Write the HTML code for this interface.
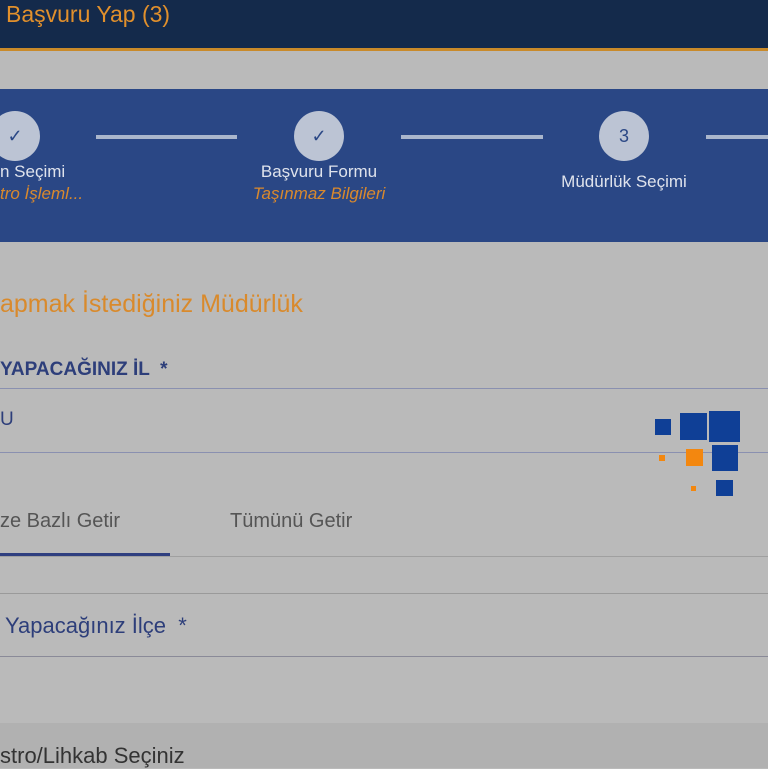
<!DOCTYPE html><html><head><meta charset="utf-8"><style>
body{margin:0;width:768px;height:768px;overflow:hidden;background:#bababa;font-family:"Liberation Sans",sans-serif;position:relative}
.a{position:absolute;white-space:nowrap}
.c{position:absolute;width:50px;height:50px;border-radius:50%;background:#bcc4d4;top:111px;color:#2a4785;font-size:18px;text-align:center;line-height:50px}
.l{position:absolute;height:4px;background:#aab6cc;top:135px}
.s{position:absolute}
</style></head><body>
<div class="a" style="left:0;top:0;width:768px;height:48px;background:#142a4b;border-bottom:3px solid #c98a2a"></div>
<div class="a" style="left:6px;top:1px;color:#e1902c;font-size:23px">Başvuru Yap (3)</div>
<div class="a" style="left:0;top:89px;width:768px;height:153px;background:#2a4785"></div>
<div class="c" style="left:-10px">✓</div>
<div class="c" style="left:294px">✓</div>
<div class="c" style="left:599px">3</div>
<div class="l" style="left:96px;width:141px"></div>
<div class="l" style="left:401px;width:142px"></div>
<div class="l" style="left:706px;width:62px"></div>
<div class="a" style="left:0;top:162px;color:#dfe3ec;font-size:17px">n Seçimi</div>
<div class="a" style="left:0;top:184px;color:#d9892d;font-size:17px;font-style:italic">tro İşleml...</div>
<div class="a" style="left:219px;width:200px;text-align:center;top:162px;color:#dfe3ec;font-size:17px">Başvuru Formu</div>
<div class="a" style="left:219px;width:200px;text-align:center;top:184px;color:#d9892d;font-size:17px;font-style:italic">Taşınmaz Bilgileri</div>
<div class="a" style="left:524px;width:200px;text-align:center;top:172px;color:#dfe3ec;font-size:17px">Müdürlük Seçimi</div>
<div class="a" style="left:0;top:290px;color:#d98a2c;font-size:25px">apmak İstediğiniz Müdürlük</div>
<div class="a" style="left:0;top:359px;color:#2d3e7a;font-size:19px;font-weight:bold">YAPACAĞINIZ İL &nbsp;*</div>
<div class="a" style="left:0;top:388px;width:768px;height:1px;background:#8a90b0"></div>
<div class="a" style="left:0;top:409px;color:#2d3e7a;font-size:19px">U</div>
<div class="a" style="left:0;top:452px;width:768px;height:1px;background:#8a90b0"></div>
<div class="s" style="left:655px;top:419px;width:16px;height:16px;background:#0f3f96"></div>
<div class="s" style="left:680px;top:413px;width:27px;height:27px;background:#0f3f96"></div>
<div class="s" style="left:709px;top:411px;width:31px;height:31px;background:#0f3f96"></div>
<div class="s" style="left:686px;top:449px;width:17px;height:17px;background:#f3870f"></div>
<div class="s" style="left:712px;top:445px;width:26px;height:26px;background:#0f3f96"></div>
<div class="s" style="left:659px;top:455px;width:6px;height:6px;background:#f3870f"></div>
<div class="s" style="left:691px;top:486px;width:5px;height:5px;background:#f3870f"></div>
<div class="s" style="left:716px;top:480px;width:17px;height:16px;background:#0f3f96"></div>
<div class="a" style="left:0;top:510px;color:#555;font-size:20px">ze Bazlı Getir</div>
<div class="a" style="left:230px;top:510px;color:#555;font-size:20px">Tümünü Getir</div>
<div class="a" style="left:0;top:556px;width:768px;height:1px;background:#a0a0a0"></div>
<div class="a" style="left:0;top:553px;width:170px;height:3px;background:#2f3f80"></div>
<div class="a" style="left:0;top:593px;width:768px;height:1px;background:#9a9a9a"></div>
<div class="a" style="left:5px;top:613px;color:#2d3e7a;font-size:22px">Yapacağınız İlçe &nbsp;*</div>
<div class="a" style="left:0;top:656px;width:768px;height:1px;background:#8a8a98"></div>
<div class="a" style="left:0;top:723px;width:768px;height:45px;background:#b1b1b1"></div>
<div class="a" style="left:0;top:743px;color:#333;font-size:22px">stro/Lihkab Seçiniz</div>
</body></html>
